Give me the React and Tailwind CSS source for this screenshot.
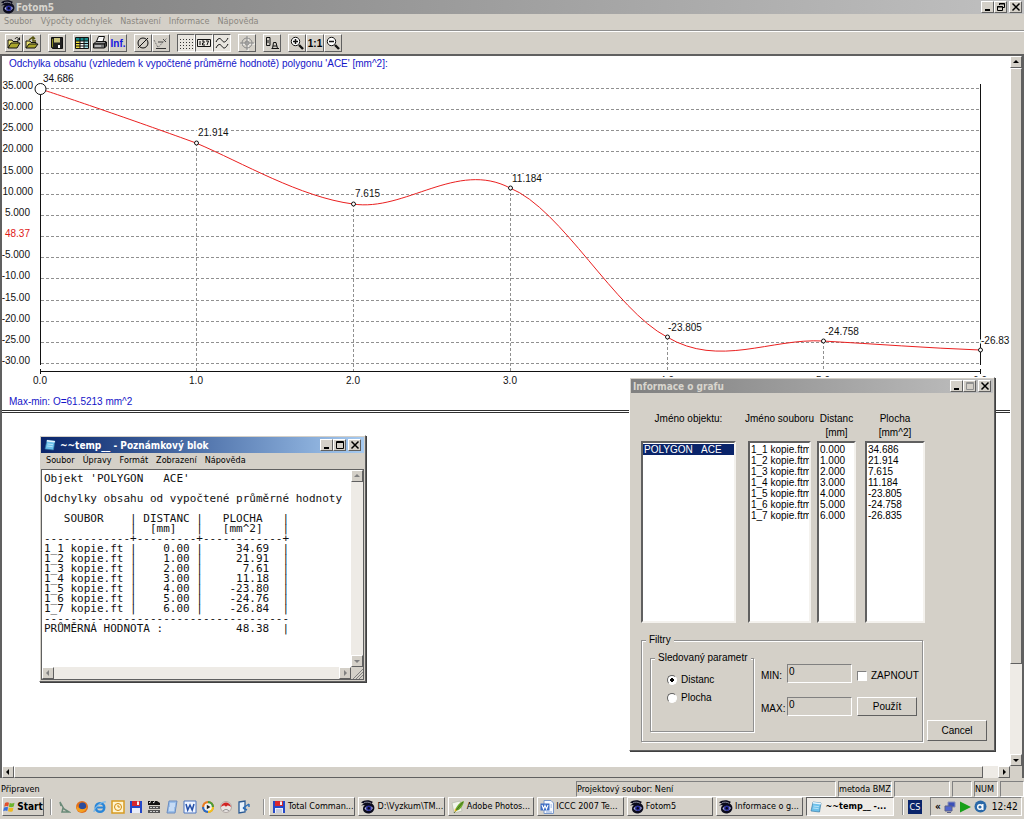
import React from 'react';

const raised = 'bg-[#d4d0c8] border border-t-white border-l-white border-r-[#606060] border-b-[#606060]';
const sunken = 'border border-t-[#808080] border-l-[#808080] border-r-white border-b-white';
const well = 'border-2 border-t-[#606060] border-l-[#606060] border-r-[#f4f2ee] border-b-[#f4f2ee]';
const uiFont = "font-['DejaVu_Sans_Condensed','DejaVu_Sans',sans-serif]";
const sansFont = "font-['Liberation_Sans',Arial,sans-serif]";

/* ---------- icons ---------- */

const EyeIcon = () => (
    <svg className="size-[14px] shrink-0" viewBox="0 0 14 14">
        <path d="M0 2.500C3 0 8 -.5 12 2L10.500 3.200C13.500 5 14.500 8.500 12 11.500C9 14.500 4 14 2.500 11C1.500 9 2 6.500 4 5L0 5.500L3 3.500Z" fill="#0b0b1c" />
        <path d="M3 2.800C5 1.800 8 2 10 3.200" stroke="#b8bccc" strokeWidth=".7" fill="none" />
        <path d="M3.500 8.500C5 5.500 9.500 5 12 8C10 11.500 5.500 12 3.500 8.500Z" fill="#b0b4e0" />
        <circle cx="7.800" cy="8.300" r="2.700" fill="#2a2f9c" />
        <circle cx="7.800" cy="8.300" r="1.200" fill="#05051a" />
    </svg>
);

const NotepadIcon = () => (
    <svg className="size-3 shrink-0" viewBox="0 0 12 12">
        <path d="M3 1L11 2L9.500 11L1 10Z" fill="#6cc0ea" stroke="#2b6f9e" strokeWidth=".6" />
        <path d="M3 1L11 2L10.800 3.500L2.700 2.500Z" fill="#e8f6ff" />
        <path d="M3.500 5L9 5.700M3.200 7L8.600 7.700" stroke="#d4f0ff" strokeWidth=".7" />
    </svg>
);

const FloppyIcon = () => (
    <svg className="size-[14px] shrink-0" viewBox="0 0 14 14">
        <path d="M1 1H13V13H1Z" fill="#2448c8" />
        <path d="M3 1H11V6H3Z" fill="#d8262c" />
        <path d="M8 1.500H10V5H8Z" fill="#f4f4f4" />
        <path d="M3 8H11V13H3Z" fill="#e8ecf8" />
        <path d="M4 10H10M4 12H10" stroke="#8890a8" strokeWidth=".7" />
    </svg>
);

const WordIcon = () => (
    <svg className="size-[14px] shrink-0" viewBox="0 0 14 14">
        <path d="M4 .5H11L13.500 3V13.500H4Z" fill="#f6f9ff" stroke="#7a98c8" />
        <path d="M10.500 5H12M10.500 7H12M6 12H12" stroke="#8aa8d8" />
        <path d="M.5 3.500H9.500V10.500H.5Z" fill="#3c6cc4" />
        <path d="M2 5L3.500 9L5 5.500L6.500 9L8 5" stroke="#fff" strokeWidth="1.100" fill="none" />
    </svg>
);

const PhotoshopIcon = () => (
    <svg className="size-[14px] shrink-0" viewBox="0 0 14 14">
        <path d="M1 3L9 1L11 11L3 13Z" fill="#f2f5ea" stroke="#a9b0a0" strokeWidth=".6" />
        <path d="M13 1C9 2 5 6 4 11C8 11 12 7 13 1Z" fill="#6aaa2a" />
        <path d="M12 2L3 13" stroke="#3b5c1c" strokeWidth=".8" />
        <path d="M4 8L6 11L3.500 11.500Z" fill="#e0b020" />
    </svg>
);

const WindowsFlag = () => (
    <svg className="size-3 shrink-0" viewBox="0 0 12 12">
        <path d="M2 2Q4 .5 6 1.800L5.200 5.500Q3.400 4.500 1.200 5.700Z" fill="#e2502c" />
        <path d="M6.700 2Q9 3 11.500 1.700L10.700 5.600Q8.200 6.700 5.900 5.700Z" fill="#6ab42e" />
        <path d="M1 6.500Q3.300 5.400 5.100 6.300L4.300 10Q2.400 9 .2 10.200Z" fill="#3a6ed8" />
        <path d="M5.800 6.600Q8 7.500 10.500 6.400L9.700 10.200Q7.300 11.200 5 10.300Z" fill="#f0b81c" />
    </svg>
);

const Tool = ({ label, active, children }) => (
    <button
        aria-label={label}
        className={
            active
                ? 'flex size-[18px] items-center justify-center bg-[#e8e5df] border border-t-[#606060] border-l-[#606060] border-r-white border-b-white'
                : 'flex size-[18px] items-center justify-center bg-[#d4d0c8] border border-t-white border-l-white border-r-[#606060] border-b-[#606060]'
        }
    >
        <svg className="size-4" viewBox="0 0 16 16" fill="none" stroke="#111" strokeWidth="1">
            {children}
        </svg>
    </button>
);

const toolbar = [
    [
        ['Otevřít', (
            <>
                <path d="M2 13V5H6L7 6.500H12V8" fill="#e8e070" />
                <path d="M2 13L5 8H14L11 13Z" fill="#a8a42c" />
                <path d="M9 4C10 2 12 2 13 4.500M13.500 2.500V5H11" />
            </>
        )],
        ['Otevřít další', (
            <>
                <path d="M2 13V6H6L7 7.500H12V9" fill="#e8e070" />
                <path d="M2 13L5 9H14L11 13Z" fill="#a8a42c" />
                <path d="M5 5L9 2L11 4M9 2V6L12 6" stroke="#55540e" strokeWidth="1.500" />
            </>
        )],
    ],
    [
        ['Uložit', (
            <>
                <path d="M2.500 2.500H13.500V13.500H3.500L2.500 12.500Z" fill="#222" />
                <path d="M5 3H11V7.500H5Z" fill="#c8c27c" stroke="none" />
                <path d="M9 10H11V13H9Z" fill="#fff" stroke="none" />
                <path d="M3.500 4V12" stroke="#8a8a20" />
            </>
        )],
    ],
    [
        ['Tabulka', (
            <>
                <path d="M1.500 2.500H14.500V13.500H1.500Z" fill="#fff" />
                <path d="M2 3H14V6H2Z" fill="#178a8a" stroke="none" />
                <path d="M2 6H6V13H2Z" fill="#f0e040" stroke="none" />
                <path d="M10 6H14V13H10Z" fill="#9fe0e8" stroke="none" />
                <path d="M1.500 6H14.500M1.500 8.500H14.500M1.500 11H14.500M6 2.500V13.500M10 2.500V13.500" />
            </>
        )],
        ['Tisk', (
            <>
                <path d="M4.500 6.500L6.500 1.500H12.500L11 6.500" fill="#fff" />
                <path d="M1.500 9L4 6.500H14L12.500 9Z" fill="#999" />
                <path d="M1.500 9H12.500V13H1.500Z" fill="#777" />
                <path d="M12.500 9L14.500 7V11L12.500 13Z" fill="#444" />
                <path d="M3 11H9M7 3.500H10" stroke="#eee" />
            </>
        )],
        ['Informace', (
            <text x="8" y="12" textAnchor="middle" fontSize="10" fontWeight="bold" fill="#1414e0" stroke="none" fontFamily="Liberation Sans">Inf.</text>
        )],
    ],
    [
        ['Průměr', (
            <>
                <circle cx="8" cy="8" r="5" />
                <path d="M3 13L13 3" />
            </>
        )],
        ['Úhel', (
            <>
                <path d="M1 5L5 12.500L14 3" stroke="#777" strokeDasharray="2 1" />
                <path d="M3 13.500H13" stroke="#333" />
                <path d="M5 7H10M10 4L13 7" stroke="#444" />
            </>
        )],
    ],
    [
        ['Mřížka', <path d="M2 4.500H15M2 7.500H15M2 10.500H15M2 13.500H15" stroke="#333" strokeDasharray="1 2" />, true],
        ['Popisky', (
            <>
                <path d="M1.500 4.500H14.500V11.500H1.500Z" />
                <path d="M4 6V10M6 6H8V8H6.500V10H9M10 6H12.500L11 10" />
            </>
        ), true],
        ['Křivky', <path d="M2 7C5 1 7 4 8.500 6S12 7 14 3M2 13C5 7 7 10 8.500 12S12 13 14 9" />, true],
    ],
    [
        ['Střed', (
            <>
                <path d="M9 2V16M2 9H16" stroke="#fff" />
                <path d="M8 1V15M1 8H15" stroke="#8a8a8a" />
                <circle cx="8" cy="8" r="5" stroke="#8a8a8a" />
                <circle cx="8" cy="8" r="2" stroke="#8a8a8a" />
            </>
        )],
    ],
    [
        ['Objekty', (
            <>
                <path d="M2.500 2.500H6V10.500H2.500ZM4 5V8" />
                <path d="M8.500 13.500L9.500 7.500H12L13.500 13.500ZM7.500 13.500H15M9 11H13" />
            </>
        )],
    ],
    [
        ['Zvětšit', (
            <>
                <circle cx="6.500" cy="6.500" r="4.200" fill="#fff" />
                <path d="M4 6.500H9M6.500 4V9" strokeWidth="1.500" />
                <path d="M10 10L14 14" strokeWidth="2.400" />
            </>
        )],
        ['Skutečná velikost', (
            <text x="8" y="12" textAnchor="middle" fontSize="10" fontWeight="bold" fill="#000" stroke="none" fontFamily="Liberation Sans">1:1</text>
        )],
        ['Zmenšit', (
            <>
                <circle cx="6.500" cy="6.500" r="4.200" fill="#fff" />
                <path d="M4 6.500H9" strokeWidth="1.500" />
                <path d="M10 10L14 14" strokeWidth="2.400" />
            </>
        )],
    ],
];

/* ---------- window parts ---------- */

const captionGlyphs = {
    Minimalizovat: <path d="M2 8H7" strokeWidth="2" />,
    Maximalizovat: <path d="M1.500 1.500H8.500V8.500H1.500ZM1 2.500H9" />,
    Obnovit: <path d="M3.500 3V1.500H8.500V5.500H7M1.500 4.500H6.500V8.500H1.500ZM1 5H7M3 2H9" />,
    Zavřít: <path d="M1.500 1.500L8.500 8.500M8.500 1.500L1.500 8.500" strokeWidth="1.500" />,
};

const CaptionButton = ({ label, dim }) => (
    <button aria-label={label} className={`flex h-3 w-[13px] items-center justify-center ${raised}`}>
        <svg className="size-[10px]" viewBox="0 0 10 10" fill="none" stroke={dim ? '#909090' : '#000'}>
            {captionGlyphs[label]}
        </svg>
    </button>
);

const CaptionButtons = ({ middle, dim }) => (
    <div className="ml-auto flex">
        <CaptionButton label="Minimalizovat" />
        <CaptionButton label={middle} dim={dim} />
        <div className="w-[2px]" />
        <CaptionButton label="Zavřít" />
    </div>
);

const arrows = {
    up: 'M1 5L4 2L7 5Z',
    down: 'M1 3L4 6L7 3Z',
    left: 'M5 1L2 4L5 7Z',
    right: 'M3 1L6 4L3 7Z',
};

const ScrollArrow = ({ dir, dim }) => (
    <button aria-label={`Posun ${dir}`} className={`flex size-3 shrink-0 items-center justify-center ${raised}`}>
        <svg className="size-2" viewBox="0 0 8 8" fill={dim ? '#808080' : '#000'}>
            <path d={arrows[dir]} />
        </svg>
    </button>
);

/* ---------- chart ---------- */

const yLabels = ['35.000', '30.000', '25.000', '20.000', '15.000', '10.000', '5.000', '48.37', '-5.000', '-10.00', '-15.00', '-20.00', '-25.00', '-30.00'];

const points = [
    { x: 40, y: 89, value: '34.686', lx: 43, ly: 82 },
    { x: 196, y: 143, value: '21.914', lx: 198, ly: 136 },
    { x: 353, y: 204, value: '7.615', lx: 355, ly: 197 },
    { x: 510, y: 188, value: '11.184', lx: 512, ly: 182 },
    { x: 667, y: 337, value: '-23.805', lx: 668, ly: 331 },
    { x: 823, y: 341, value: '-24.758', lx: 825, ly: 335 },
    { x: 980, y: 350, value: '-26.83', lx: 981, ly: 344 },
];

const Chart = () => (
    <svg className={`block w-full ${sansFont} text-[10px]`} viewBox="2 56 1008 354">
        <text x="9" y="67" fill="#1414c8">Odchylka obsahu (vzhledem k vypočtené průměrné hodnotě) polygonu 'ACE' [mm^2]:</text>
        {yLabels.map((label, i) => {
            const y = Math.round(88 + i * 21.15) + 0.5;
            const red = label === '48.37';
            return (
                <g key={label}>
                    <path d={`M41 ${y}H980`} stroke="#909090" strokeDasharray="3 2" />
                    <text x={i < 6 ? 33 : 30} y={y} textAnchor="end" fill={red ? '#e01818' : '#111'}>{label}</text>
                </g>
            );
        })}
        {points.map((p, i) => (
            <g key={p.value}>
                {i > 0 && i < 6 && <path d={`M${p.x + 0.5} ${p.y}V372`} stroke="#909090" strokeDasharray="3 2" />}
                <text x={p.x} y="384" textAnchor="middle" fill="#111">{`${i}.0`}</text>
            </g>
        ))}
        <path d="M40.500 89V365M980.500 84V365M40 371.500H981M40.500 369V374M980.500 369V374" stroke="#111" />
        <path
            d="M40 89C60 95 144 124 196 143C243 163 300 197 353 204C405 212 457 160 510 188C562 209 615 310 667 337C719 368 771 338 823 341C875 344 928 348 980 350"
            fill="none"
            stroke="#ea2020"
        />
        {points.map((p, i) => (
            <g key={p.value}>
                <circle cx={p.x + 0.5} cy={p.y} r={i === 0 ? 5.5 : 2} fill="#fff" stroke="#111" />
                <text x={p.lx} y={p.ly} fill="#111" stroke="#fff" strokeWidth="3" paintOrder="stroke">{p.value}</text>
            </g>
        ))}
        <text x="9" y="405" fill="#1414c8">Max-min: O=61.5213 mm^2</text>
    </svg>
);

/* ---------- notepad ---------- */

const report = `Objekt 'POLYGON   ACE'

Odchylky obsahu od vypočtené průměrné hodnoty

   SOUBOR    | DISTANC |   PLOCHA   |
             |  [mm]   |   [mm^2]   |
-------------+---------+------------+
1_1 kopie.ft |    0.00 |     34.69  |
1_2 kopie.ft |    1.00 |     21.91  |
1_3 kopie.ft |    2.00 |      7.61  |
1_4 kopie.ft |    3.00 |     11.18  |
1_5 kopie.ft |    4.00 |    -23.80  |
1_6 kopie.ft |    5.00 |    -24.76  |
1_7 kopie.ft |    6.00 |    -26.84  |
-------------------------------------
PRŮMĚRNÁ HODNOTA :           48.38  |`;

const Notepad = () => (
    <section className={`absolute left-[37px] top-[379px] w-[327px] p-px shadow-[1px_1px_0_#404040] ${raised}`}>
        <header className="flex h-4 items-center gap-1 bg-linear-to-r from-[#0a246a] to-[#a6caf0] px-[3px] text-[10px] font-bold text-white">
            <NotepadIcon />
            ~~temp__ - Poznámkový blok
            <CaptionButtons middle="Maximalizovat" />
        </header>
        <nav className="flex h-4 items-center gap-2 px-[5px] text-[9px]">
            {['Soubor', 'Úpravy', 'Formát', 'Zobrazení', 'Nápověda'].map((item) => (
                <button key={item}>{item}</button>
            ))}
        </nav>
        <div className="border border-[#606060] bg-[#eeebe6]">
            <div className="flex">
                <textarea
                    readOnly
                    aria-label="Text dokumentu"
                    value={report}
                    className="h-[197px] min-w-0 grow resize-none overflow-hidden whitespace-pre bg-white pl-[2px] pt-1 font-['DejaVu_Sans_Mono',monospace] text-[11px] leading-[10px] text-[#111] outline-none"
                />
                <div className="flex w-3 flex-col justify-between">
                    <ScrollArrow dir="up" dim />
                    <ScrollArrow dir="down" dim />
                </div>
            </div>
            <div className="flex h-3">
                <ScrollArrow dir="left" dim />
                <div className="grow" />
                <ScrollArrow dir="right" dim />
                <svg className="size-3 bg-[#d4d0c8]" viewBox="0 0 12 12" stroke="#808080">
                    <path d="M2 12L12 2M5 12L12 5M8 12L12 8" />
                </svg>
            </div>
        </div>
    </section>
);

/* ---------- info dialog ---------- */

const objects = ['POLYGON\u00a0\u00a0\u00a0ACE'];
const files = ['1_1 kopie.ftm', '1_2 kopie.ftm', '1_3 kopie.ftm', '1_4 kopie.ftm', '1_5 kopie.ftm', '1_6 kopie.ftm', '1_7 kopie.ftm'];
const distances = ['0.000', '1.000', '2.000', '3.000', '4.000', '5.000', '6.000'];
const areas = ['34.686', '21.914', '7.615', '11.184', '-23.805', '-24.758', '-26.835'];

const ListColumn = ({ id, title, unit, items, width, selected }) => (
    <div className={`flex flex-col ${width}`}>
        <label htmlFor={id} className="flex h-[29px] flex-col items-center whitespace-nowrap leading-[14px]">
            <span>{title}</span>
            <span>{unit}</span>
        </label>
        <select
            id={id}
            size={17}
            defaultValue={selected}
            className={`h-[182px] w-full overflow-hidden bg-white pt-px ${well}`}
        >
            {items.map((item) => (
                <option
                    key={item}
                    value={item}
                    className="min-h-[10px] p-0 pl-px leading-[10px] checked:bg-[linear-gradient(#0a246a,#0a246a)] checked:text-white"
                >
                    {item}
                </option>
            ))}
        </select>
    </div>
);

const LimitField = ({ id, label }) => (
    <div className="flex items-center">
        <label htmlFor={id} className="w-[26px] pt-1">{label}</label>
        <input id={id} defaultValue="0" className={`h-[19px] w-[65px] bg-[#d4d0c8] pb-1 pl-px outline-none ${sunken}`} />
    </div>
);

const group = 'border border-[#909090] shadow-[1px_1px_0_#fff,inset_1px_1px_0_#fff]';

const InfoDialog = () => (
    <section className={`absolute left-[627px] top-[321px] w-[366px] p-px shadow-[1px_1px_0_#404040] ${raised} ${sansFont} text-[10px]`}>
        <header className={`flex h-[14px] items-center bg-linear-to-r from-[#808080] to-[#c0c0c0] px-[2px] font-bold text-[#d8d5ce] ${uiFont}`}>
            Informace o grafu
            <CaptionButtons middle="Maximalizovat" dim />
        </header>
        <div className="pb-[7px] pl-[10px] pr-2 pt-[19px]">
            <div className="flex items-start">
                <ListColumn id="objekt" title="Jméno objektu:" unit="" items={objects} width="w-[95px]" selected={objects[0]} />
                <div className="w-3" />
                <ListColumn id="soubor" title="Jméno souboru" unit="" items={files} width="w-[63px]" />
                <div className="w-[6px]" />
                <ListColumn id="distanc" title="Distanc" unit="[mm]" items={distances} width="w-[39px]" />
                <div className="w-[9px]" />
                <ListColumn id="plocha" title="Plocha" unit="[mm^2]" items={areas} width="w-[60px]" />
            </div>
            <div className="mt-[11px] flex items-end gap-1">
                <fieldset className={`flex w-[282px] shrink-0 gap-[7px] pb-[9px] pl-2 pt-[6px] ${group}`}>
                    <legend className="-ml-1 bg-[#d4d0c8] px-[3px] leading-3">Filtry</legend>
                    <fieldset className={`flex h-[80px] w-[104px] flex-col gap-2 pl-4 pt-[11px] ${group}`}>
                        <legend className="-ml-3 bg-[#d4d0c8] px-[3px] leading-3">Sledovaný parametr</legend>
                        {['Distanc', 'Plocha'].map((item, i) => (
                            <label key={item} className="flex items-center gap-1 leading-[10px]">
                                <input
                                    type="radio"
                                    name="parametr"
                                    defaultChecked={i === 0}
                                    className="size-[10px] appearance-none rounded-full border border-b-white border-l-[#606060] border-r-white border-t-[#606060] bg-white checked:bg-[radial-gradient(circle,#000_0_2px,#fff_2px)]"
                                />
                                {item}
                            </label>
                        ))}
                    </fieldset>
                    <div className="flex flex-col gap-[14px] pt-3">
                        <LimitField id="min" label="MIN:" />
                        <LimitField id="max" label="MAX:" />
                    </div>
                    <div className="-ml-[2px] flex flex-col gap-3 pt-[14px]">
                        <label className="flex h-[19px] items-center gap-1">
                            <input
                                type="checkbox"
                                className={`size-[10px] appearance-none bg-white ${sunken}`}
                            />
                            ZAPNOUT
                        </label>
                        <button className={`h-[19px] w-[60px] ${raised}`}>Použít</button>
                    </div>
                </fieldset>
                <button className={`mb-px h-[21px] w-[60px] shrink-0 ${raised}`}>Cancel</button>
            </div>
        </div>
    </section>
);

/* ---------- taskbar ---------- */

const quickLaunch = [
    ['Plocha', <path d="M3 2L7 9L12 12H5L6 8M3 2L4 6" stroke="#6a8a78" strokeWidth="1.500" fill="none" />],
    ['Firefox', (
        <>
            <circle cx="7" cy="7" r="6" fill="#e0701c" />
            <circle cx="7.500" cy="6" r="3.600" fill="#2a4c9c" />
            <path d="M1.500 5C3 9 8 11 12 7C11 12 5 14 2 10Z" fill="#f4a020" />
        </>
    )],
    ['Internet Explorer', (
        <>
            <circle cx="7" cy="7.500" r="4.300" fill="none" stroke="#2a86d8" strokeWidth="2.400" />
            <path d="M4 7.500H11" stroke="#2a86d8" strokeWidth="2" />
            <path d="M1 12C1 8 8 1 13 2" stroke="#7ab8e8" strokeWidth="1.200" fill="none" />
        </>
    )],
    ['Outlook', (
        <>
            <path d="M1 1H13V13H1Z" fill="#fff4d0" stroke="#d89a20" strokeWidth="1.500" />
            <circle cx="7" cy="7" r="3.500" fill="none" stroke="#d08a10" />
            <path d="M7 5V7H9" stroke="#d08a10" fill="none" />
        </>
    )],
    ['Total Commander', (
        <>
            <path d="M1 1H13V13H1Z" fill="#2448c8" />
            <path d="M3 1H11V6H3Z" fill="#d8262c" />
            <path d="M8 1.500H10V5H8Z" fill="#f4f4f4" />
            <path d="M3 8H11V13H3Z" fill="#e8ecf8" />
        </>
    )],
    ['Video', (
        <>
            <path d="M1 1H10L13 3V5H1Z" fill="#111" />
            <path d="M2 3L4 1.500M6 3L8 1.500" stroke="#fff" />
            <path d="M2 6H13V9H2ZM1 10H13V13H1Z" fill="#555" />
            <path d="M3 7.500H11M3 11.500H11" stroke="#ccc" strokeDasharray="2 1" />
        </>
    )],
    ['Poznámkový blok', (
        <>
            <path d="M4 1H12L10 13H2Z" fill="#9cc0ea" stroke="#6a8cc0" />
            <path d="M5 4H10M5 6H10M4 8H9M4 10H9" stroke="#f0f6ff" />
        </>
    )],
    ['Word', (
        <>
            <path d="M1 1H13V13H1Z" fill="#eef4ff" stroke="#4a74c0" />
            <path d="M3 4L4.700 10L7 5L9.200 10L11 4" stroke="#244fa8" strokeWidth="1.500" fill="none" />
        </>
    )],
    ['Media Player', (
        <>
            <circle cx="7" cy="7" r="6" fill="#e87a20" />
            <path d="M7 1A6 6 0 0 1 13 7H7Z" fill="#4a9c38" />
            <path d="M7 13A6 6 0 0 1 1 7H7Z" fill="#2a6cc8" />
            <path d="M7 13A6 6 0 0 0 13 7H7Z" fill="#f0c020" />
            <circle cx="7" cy="7" r="3.800" fill="#f4f4f4" />
            <path d="M5.800 4.800L9.500 7L5.800 9.200Z" fill="#222" />
        </>
    )],
    ['Nero', (
        <>
            <circle cx="7" cy="7" r="5.500" fill="#e8e4e2" stroke="#b0a8a4" />
            <path d="M2 7C3 1 11 1 12 7C10 5 8 5 7 7C6 5 4 5 2 7Z" fill="#d02424" />
            <path d="M4 11C6 9 8 9 10 11" stroke="#888" fill="none" />
        </>
    )],
    ['Odhlásit', (
        <>
            <path d="M2 2L8 1V12L2 13Z" fill="#e8f2fc" stroke="#2a5a94" strokeWidth="1.300" />
            <path d="M6 8L12 4M12 4V7M6 8L10 10" stroke="#2a6cb8" strokeWidth="1.400" fill="none" />
        </>
    )],
];

const tasks = [
    ['Total Comman...', FloppyIcon],
    ['D:\\Vyzkum\\TM...', EyeIcon],
    ['Adobe Photos...', PhotoshopIcon],
    ['ICCC 2007 Te...', WordIcon],
    ['Fotom5', EyeIcon],
    ['Informace o g...', EyeIcon],
    ['~~temp__ -...', NotepadIcon],
];

const Divider = () => <div className="h-4 w-[2px] border-l border-r border-l-[#909090] border-r-white" />;

const Taskbar = () => (
    <footer className="flex h-[22px] shrink-0 items-start bg-[#d4d0c8] px-[2px] text-[10px]">
        <button className={`flex h-[19px] w-[42px] items-center justify-center gap-[2px] font-bold ${raised}`}>
            <WindowsFlag />
            Start
        </button>
        <div className="flex h-[19px] items-center pl-[6px]">
            <Divider />
            <div className="flex gap-1 pl-[5px] pr-3">
                {quickLaunch.map(([name, art]) => (
                    <button key={name} aria-label={name}>
                        <svg className="size-[14px]" viewBox="0 0 14 14">{art}</svg>
                    </button>
                ))}
            </div>
            <Divider />
        </div>
        <div className="ml-1 flex min-w-0 grow gap-[3px] text-[9px]">
            {tasks.map(([name, Icon], i) => (
                <button
                    key={name}
                    className={
                        i === 6
                            ? 'flex h-[19px] min-w-0 flex-1 items-center gap-1 whitespace-nowrap border border-b-white border-l-[#606060] border-r-white border-t-[#606060] bg-[#eeebe6] px-[3px] font-bold'
                            : 'flex h-[19px] min-w-0 flex-1 items-center gap-[2px] whitespace-nowrap border border-b-[#606060] border-l-white border-r-[#606060] border-t-white bg-[#d4d0c8] px-[2px]'
                    }
                >
                    <Icon />
                    {name}
                </button>
            ))}
        </div>
        <div className="flex h-[19px] items-center gap-1 px-2">
            <Divider />
            <button className="h-[14px] w-[14px] bg-[#0a246a] text-[9px] leading-[14px] text-white">CS</button>
        </div>
        <div className={`flex h-[19px] w-[92px] items-center gap-[3px] pl-1 ${sunken}`}>
            <button aria-label="Zobrazit skryté ikony" className="font-bold leading-3">«</button>
            <svg className="size-3" viewBox="0 0 12 12">
                <path d="M4 1H11V6H4Z" fill="#3c50b8" stroke="#8a92b8" />
                <path d="M1 5H8V10H1Z" fill="#5066d0" stroke="#5a6088" />
                <path d="M3 11.500H7" stroke="#5a6088" />
            </svg>
            <svg className="size-3" viewBox="0 0 12 12">
                <path d="M1 .5L12 6L1 11.500Z" fill="#18a018" />
            </svg>
            <svg className="size-[13px]" viewBox="0 0 13 13">
                <circle cx="6.500" cy="6.500" r="6" fill="#2a68a8" />
                <circle cx="6" cy="7" r="2.300" fill="none" stroke="#fff" strokeWidth="1.400" />
                <path d="M8.800 4V10" stroke="#fff" strokeWidth="1.400" />
            </svg>
            <span className="pl-[2px]">12:42</span>
        </div>
    </footer>
);

const App = () => (
    <div className={`flex h-screen flex-col overflow-hidden bg-[#d4d0c8] text-black ${uiFont}`}>
        <header className="flex h-[14px] shrink-0 items-center gap-px bg-linear-to-r from-[#808080] to-[#c0c0c0] pl-px pr-[2px] text-[10px] font-bold text-[#d8d5ce]">
            <EyeIcon />
            Fotom5
            <CaptionButtons middle="Obnovit" />
        </header>
        <nav className="flex h-[17px] shrink-0 items-center gap-2 border-b border-[#909090] px-1 text-[9px] text-[#8a8780]">
            {['Soubor', 'Výpočty odchylek', 'Nastavení', 'Informace', 'Nápověda'].map((item) => (
                <button key={item}>{item}</button>
            ))}
        </nav>
        <div className="flex h-[23px] shrink-0 items-center gap-[7px] border-t border-white px-[5px]">
            {toolbar.map((tools) => (
                <div key={tools[0][0]} className="flex">
                    {tools.map(([label, art, active]) => (
                        <Tool key={label} label={label} active={active}>{art}</Tool>
                    ))}
                </div>
            ))}
        </div>
        <main className="flex min-h-0 grow flex-col border-2 border-b-0 border-l-[#606060] border-r-[#606060] border-t-[#606060]">
            <div className="flex min-h-0 grow">
                <div className="relative min-w-0 grow overflow-hidden bg-white">
                    <Chart />
                    <div className="h-[3px] border-y border-[#303030]" />
                    <Notepad />
                    <InfoDialog />
                </div>
                <div className="flex w-3 flex-col bg-[#eeebe6]">
                    <ScrollArrow dir="up" />
                    <div className={`h-[84%] ${raised}`} />
                    <div className="grow" />
                    <ScrollArrow dir="down" />
                </div>
            </div>
            <div className="flex h-3 shrink-0 bg-[#eeebe6]">
                <ScrollArrow dir="left" />
                <div className={`w-[95%] ${raised}`} />
                <div className="grow" />
                <ScrollArrow dir="right" />
                <div className="w-3 bg-[#d4d0c8]" />
            </div>
        </main>
        <div className="flex h-[19px] shrink-0 items-center gap-[2px] pb-px pt-[3px] text-[9px] leading-[14px]">
            <span className="grow pl-px">Připraven</span>
            <span className={`w-[260px] ${sunken}`}>Projektový soubor: Není</span>
            <span className={`w-[54px] ${sunken}`}>metoda BMZ</span>
            <span className={`h-4 w-[56px] ${sunken}`} />
            <span className={`h-4 w-5 ${sunken}`} />
            <span className={`w-6 ${sunken}`}>NUM</span>
            <span className={`h-4 w-6 ${sunken}`} />
        </div>
        <Taskbar />
    </div>
);

export default App;
